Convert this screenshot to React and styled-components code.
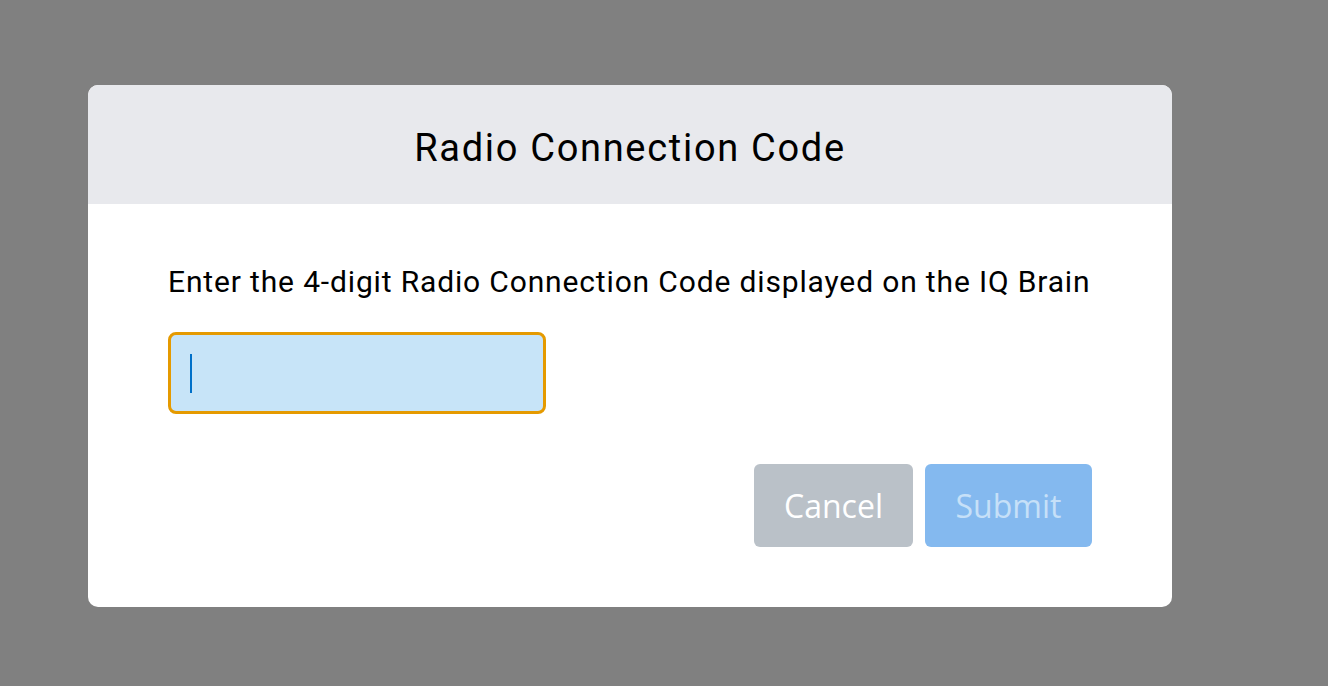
import React from 'react';
import styled, { createGlobalStyle } from 'styled-components';

const GlobalStyle = createGlobalStyle`
  html, body {
    margin: 0;
    padding: 0;
    background: #808080;
  }
  body {
    font-family: Roboto, "Liberation Sans", sans-serif;
  }
`;

const Overlay = styled.div`
  width: 1328px;
  height: 686px;
  background: #808080;
  padding: 85px 0 0 88px;
  box-sizing: border-box;
`;

const Dialog = styled.div`
  width: 1084px;
  height: 522px;
  background: #ffffff;
  border-radius: 10px;
  overflow: hidden;
  display: flex;
  flex-direction: column;
`;

const Header = styled.div`
  height: 119px;
  box-sizing: border-box;
  padding-top: 7px;
  background: #e8e9ed;
  display: flex;
  align-items: center;
  justify-content: center;
`;

const Title = styled.h1`
  margin: 0;
  font-family: Roboto, sans-serif;
  font-weight: 400;
  font-size: 38px;
  line-height: 40px;
  letter-spacing: 1.7px;
  color: #000;
`;

const Body = styled.div`
  padding: 60px 80px 0;
  display: flex;
  flex-direction: column;
`;

const Prompt = styled.p`
  margin: 0;
  font-family: Roboto, sans-serif;
  font-size: 30px;
  line-height: 36px;
  letter-spacing: 0.85px;
  color: #000;
  white-space: nowrap;
`;

const CodeField = styled.div`
  margin-top: 32px;
  width: 378px;
  height: 82px;
  box-sizing: border-box;
  border: 3px solid #e59a00;
  border-radius: 8px;
  background: #c7e4f8;
  display: flex;
  align-items: center;
  padding-left: 19px;
`;

const Caret = styled.span`
  display: block;
  width: 2px;
  height: 39px;
  background: #0070c9;
`;

const Actions = styled.div`
  margin-top: 50px;
  display: flex;
  justify-content: flex-end;
  gap: 12px;
`;

const Button = styled.button`
  height: 83px;
  min-width: ${(p) => p.$width}px;
  border: none;
  border-radius: 6px;
  font-family: "Open Sans", sans-serif;
  font-size: 32px;
  padding: 0 30px;
  background: ${(p) => (p.$primary ? '#84b9ef' : '#bac1c8')};
  color: ${(p) => (p.$primary ? '#c6e0f8' : '#ffffff')};
`;

const App = () => {
  return (
    <>
      <GlobalStyle />
      <Overlay>
        <Dialog>
          <Header>
            <Title>Radio Connection Code</Title>
          </Header>
          <Body>
            <Prompt>
              Enter the 4-digit Radio Connection Code displayed on the IQ Brain
            </Prompt>
            <CodeField>
              <Caret />
            </CodeField>
            <Actions>
              <Button $width={159}>Cancel</Button>
              <Button $width={167} $primary disabled>
                Submit
              </Button>
            </Actions>
          </Body>
        </Dialog>
      </Overlay>
    </>
  );
};

export default App;
